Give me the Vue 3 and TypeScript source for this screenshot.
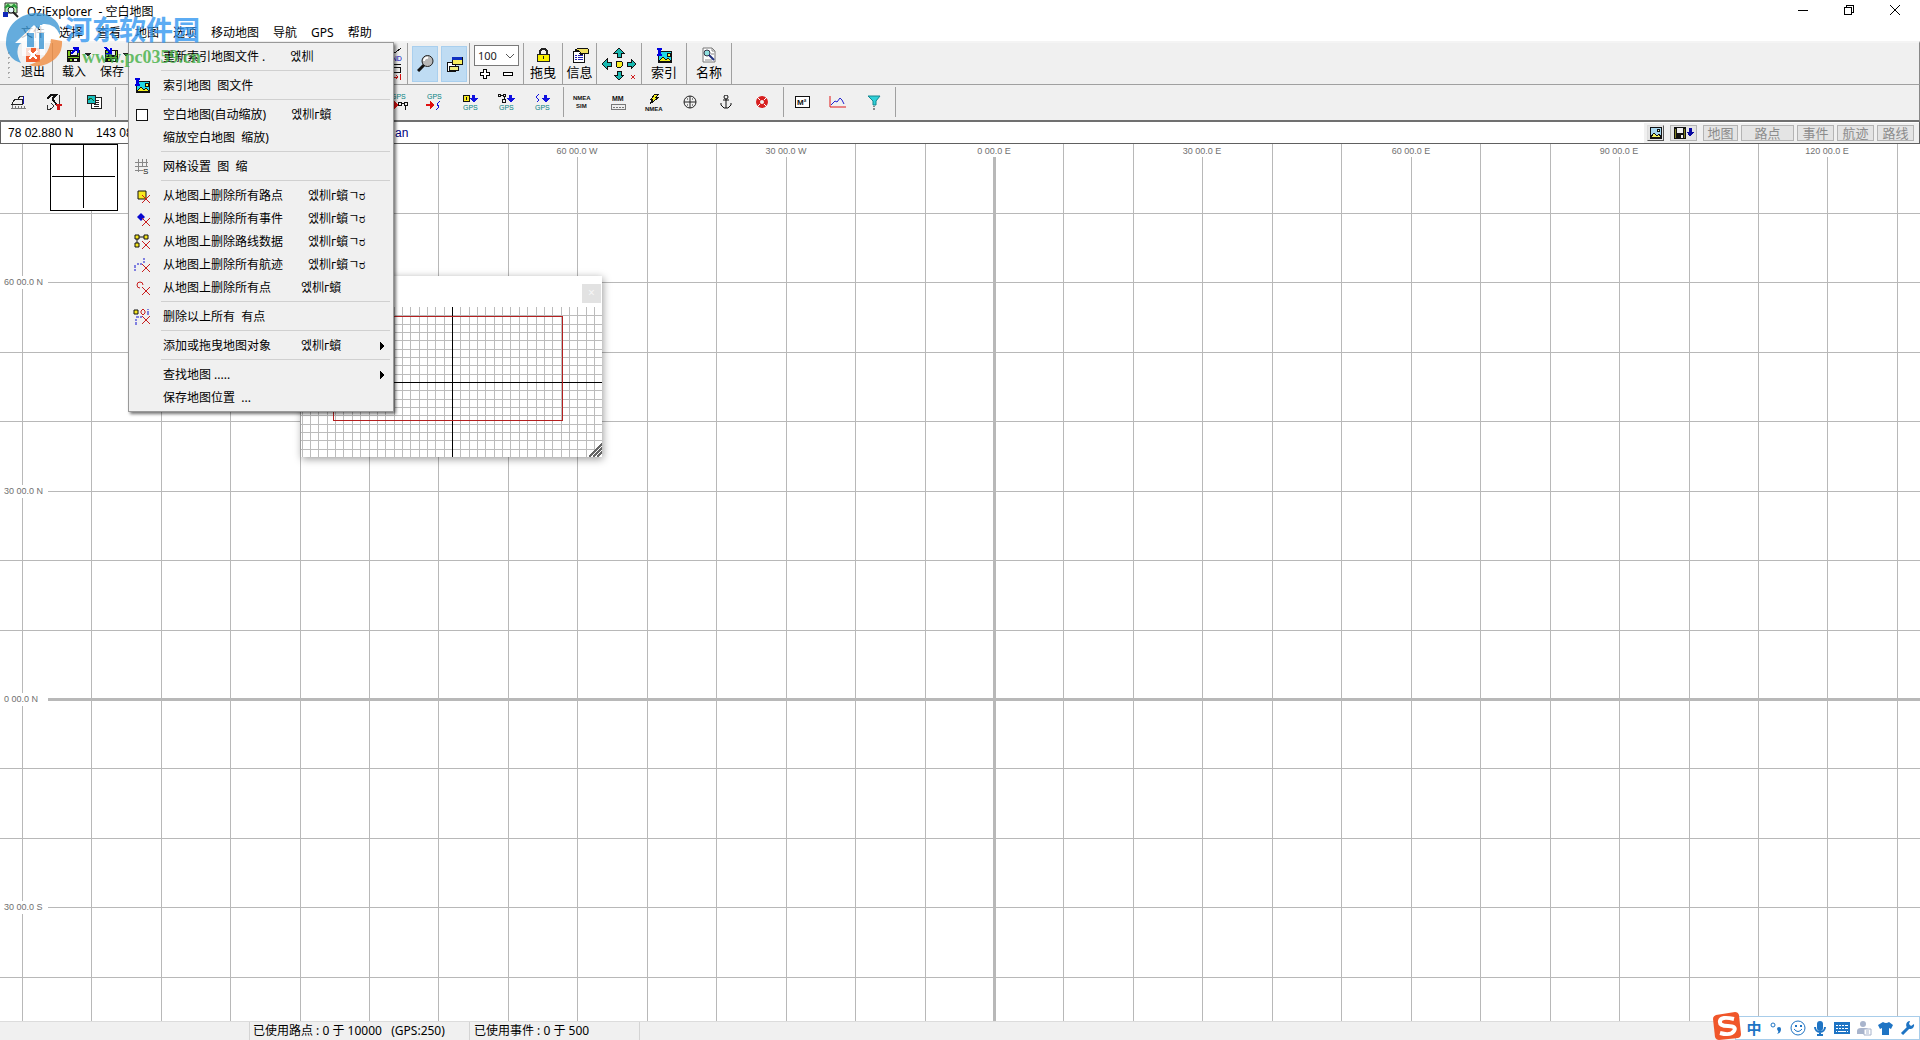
<script setup lang="ts">
import { h, ref } from 'vue'

type Shape = { d?: string; f?: string; s?: string; w?: number; t?: string; x?: number; y?: number; z?: number; b?: boolean }
type Icon = { w: number; h: number; soft?: boolean; shapes: Shape[] }

const GPS_TOP: Shape = { t: 'GPS', x: 3, y: 6, f: '#008080', z: 7 }
const GPS_LOW: Shape = { t: 'GPS', x: 3, y: 17, f: '#008080', z: 7 }
const RED_X: Shape = { d: 'M8 7l8 8M16 7l-8 8', s: '#c81e1e', w: 1 }
const FLOPPY: Shape[] = [
  { d: 'M1 3h13v12h-13z', f: '#111' },
  { d: 'M2 4h2v5h-2zM12 4h1v5h-1zM2 10h11v1h-11zM4 12h2v2h-2z', f: '#7ec820' },
  { d: 'M5 4h6v4h-6z', f: '#efefef' },
  { d: 'M8 12h3v2h-3z', f: '#efefef' },
]

const PICTURE: Shape[] = [
  { d: 'M4 3h10v11h-13v-6', f: '#20d8e8', s: '#111', w: 1 },
  { d: 'M2 13l4-4 3 3 2-2 3 3z', f: '#f0f020', s: '#111', w: 1 },
  { d: 'M10 5h3v3h-3z', f: '#f8f840', s: '#111', w: 1 },
  { d: 'M0 0h5v2h-1v4h1v2h-5v-2h1v-4h-1z', f: '#0000e0' },
]

const icons: Record<string, Icon> = {
  app: { w: 16, h: 16, soft: true, shapes: [
    { d: 'M2 1h12v10h-12z', f: '#b8f0b0', s: '#333', w: 1 },
    { d: 'M2 6l3-3 3 3 3-3 3 3', s: '#2a9a3a', w: 2 },
    { d: 'M5 8a3 3 0 1 0 6 0a3 3 0 1 0-6 0', f: '#e8f8ff', s: '#222', w: 1 },
    { d: 'M10 10l5 5', s: '#222', w: 2 },
    { d: 'M0 10h5v5h-5z', f: '#1028b8' },
  ] },
  exit: { w: 16, h: 16, shapes: [
    { d: 'M1 1h14v14h-14z', f: '#f06030' }, { d: 'M4 4l8 8M12 4l-8 8', s: '#fff', w: 2 },
  ] },
  load: { w: 16, h: 16, shapes: [...FLOPPY, { d: 'M5 7l6-6M7 1h5v5', s: '#0000e0', w: 2 }] },
  save: { w: 16, h: 16, shapes: [...FLOPPY, { d: 'M1 0l6 6M7 1v6h-5', s: '#0000e0', w: 2 }] },
  caret: { w: 8, h: 4, shapes: [{ d: 'M0 0h7l-3 4z', f: '#222' }] },
  track: { w: 16, h: 36, shapes: [
    { d: 'M2 8l4-2h4l5-4', s: '#111', w: 1 },
    { t: 'SND', x: 1, y: 15, f: '#0000c0', z: 7 },
    { d: 'M1 18h14M7 21h7v5h-7zM1 23h6', s: '#111', w: 1 },
    { d: 'M3 31h9M10 29l2 2-2 2M14 28v6', s: '#d01010', w: 1 },
  ] },
  lens: { w: 17, h: 17, soft: true, shapes: [
    { d: 'M7 10l-6 6', s: '#111', w: 3 },
    { d: 'M5 6a5 5 0 1 0 11 0a5 5 0 1 0-11 0', f: '#b8b8b8', s: '#222', w: 1 },
    { d: 'M7 6a3 3 0 0 1 4-3', s: '#fff', w: 2 },
  ] },
  windows: { w: 17, h: 16, shapes: [
    { d: 'M1 6h8v9h-8z', f: '#fff', s: '#111', w: 1 },
    { d: 'M3 10h9v4h-9z', f: '#f0f080', s: '#111', w: 1 },
    { d: 'M6 1h10v7h-10z', f: '#f8f060', s: '#111', w: 1 },
    { d: 'M6 1h10v3h-10z', f: '#1030c0' },
  ] },
  lock: { w: 15, h: 16, shapes: [
    { d: 'M4 8v-4l2-2h3l2 2v4', s: '#222', w: 2 },
    { d: 'M1 7h12v7h-12z', f: '#f8f000', s: '#222', w: 1 },
    { d: 'M7 9h1v3h-1z', f: '#222' },
  ] },
  info: { w: 18, h: 16, shapes: [
    { d: 'M2 4h11v11h-11z', f: '#fff', s: '#111', w: 1 },
    { d: 'M4 8h2M7 8h5M4 10h2M7 10h5M4 12h2M7 12h5', s: '#2020b0', w: 1 },
    { d: 'M4 3l4-2h4l5 1v4h-4l-3 2-2-2h2l-2-2z', f: '#f0e060', s: '#111', w: 1 },
  ] },
  arrows: { w: 36, h: 34, shapes: [
    { d: 'M18 1l5 5h-3v4h-4v-4h-3z M18 33l5-5h-3v-4h-4v4h-3z M1 17l5-5v3h4v4h-4v3z M35 17l-5-5v3h-4v4h4v3z', f: '#18b8b0', s: '#111', w: 1 },
    { d: 'M16 14h4l1 1v4l-1 1h-4l-1-1v-4z', f: '#f8f020', s: '#111', w: 1 },
    { d: 'M30 28l4 4M34 28l-4 4', s: '#d02020', w: 1 },
  ] },
  picture: { w: 15, h: 15, shapes: PICTURE },
  find: { w: 16, h: 16, soft: true, shapes: [
    { d: 'M2 1h9l3 3v11h-12z', f: '#fff', s: '#777', w: 1 },
    { d: 'M11 1v3h3M4 13h7M10 7h3', s: '#888', w: 1 },
    { d: 'M3 6a3 3 0 1 0 6 0a3 3 0 1 0-6 0', f: '#90e0e0', s: '#334', w: 1 },
    { d: 'M8 8l5 5', s: '#203080', w: 2 },
  ] },
  plan: { w: 17, h: 16, shapes: [
    { d: 'M2 10l3-5h7v5zM8 5l2-3h3v8', s: '#222', w: 1 },
    { d: 'M13 2h1v8h-1z', f: '#1010b0' },
    { d: 'M1 14h15M2 11v3M5 12v2M8 12v2M11 12v2M14 12v2', s: '#777', w: 1 },
  ] },
  tools: { w: 17, h: 17, shapes: [
    { d: 'M1 5l4-4h5l-3 3v2l4 5', s: '#111', w: 2 },
    { d: 'M1 11v4l2 1 3-2 2-2-3-3M13 1v10', s: '#333', w: 1 },
    { d: 'M10 10h6v2h-2v4h-3v-4h-1z', f: '#d01818' },
  ] },
  pages: { w: 16, h: 16, shapes: [
    { d: 'M5 3h10v11h-10z', f: '#fff', s: '#222', w: 1 },
    { d: 'M8 6h5M8 8h5M8 10h5M8 12h5', s: '#222', w: 1 },
    { d: 'M1 1h8v8h-8z', f: '#18c0c0', s: '#222', w: 1 },
    { d: 'M2 6l3-2 3 3', s: '#186020', w: 1 },
  ] },
  gpsRoute: { w: 20, h: 18, shapes: [GPS_TOP, { d: 'M1 11h5v-3l5 4-5 4v-3h-5z', f: '#e01010' }, { d: 'M10 9h3v3h-3zM13 10h4M16 9h3v3h-3zM17 12v5', s: '#111', w: 1 }] },
  gpsTrack: { w: 20, h: 18, shapes: [GPS_TOP, { d: 'M2 11h4v-3l5 4-5 4v-3h-4z', f: '#e01010' }, { d: 'M16 8l-3 3 2 3-3 3', s: '#1010e0', w: 1 }] },
  pointGps: { w: 20, h: 18, shapes: [GPS_LOW, { d: 'M3 2h6v6h-6z', f: '#f8e820', s: '#111', w: 1 }, { d: 'M6 4v3', s: '#111', w: 1 }, { d: 'M12 2h3v3h3l-4 4-5-4h3z', f: '#1010e0' }] },
  routeGps: { w: 20, h: 18, shapes: [GPS_LOW, { d: 'M2 1h2v2h-2zM4 2h3M7 1h2v2h-2zM8 3v3M6 6h3v3h-3z', s: '#111', w: 1 }, { d: 'M13 2h3v3h3l-4 4-5-4h3z', f: '#1010e0' }] },
  trackGps: { w: 20, h: 18, shapes: [GPS_LOW, { d: 'M7 1l-3 3 3 3-2 2', s: '#1010e0', w: 1 }, { d: 'M12 2h3v3h3l-4 4-5-4h3z', f: '#1010e0' }] },
  nmeaSim: { w: 20, h: 18, shapes: [{ t: 'NMEA', x: 1, y: 7, f: '#111', z: 6, b: true }, { t: 'SIM', x: 4, y: 15, f: '#111', z: 6, b: true }] },
  mm: { w: 20, h: 18, shapes: [
    { t: 'MM', x: 4, y: 8, f: '#111', z: 7, b: true },
    { d: 'M3 11h14v5h-14z', f: '#eee', s: '#777', w: 1 }, { d: 'M5 14h2M8 14h2M11 14h2M14 14h2', s: '#777', w: 1 },
  ] },
  nmea: { w: 20, h: 18, shapes: [{ d: 'M11 1h4l-3 3h3l-9 7 3-5h-2z', f: '#f8f020', s: '#111', w: 1 }, { t: 'NMEA', x: 1, y: 18, f: '#111', z: 6, b: true }] },
  target: { w: 16, h: 16, soft: true, shapes: [{ d: 'M2 8a6 6 0 1 0 12 0a6 6 0 1 0-12 0M8 2v12M2 8h12', s: '#222', w: 1 }, { d: 'M5 5h1M10 5h1M5 11h1M10 11h1', s: '#222', w: 1 }] },
  anchor: { w: 12, h: 14, soft: true, shapes: [{ d: 'M4 2a2 2 0 1 0 4 0a2 2 0 1 0-4 0M6 4v9M3 5h6M1 8v2l3 3h4l3-3v-2', s: '#111', w: 1 }] },
  buoy: { w: 14, h: 14, soft: true, shapes: [
    { d: 'M3 7a4 4 0 1 0 8 0a4 4 0 1 0-8 0', s: '#d82020', w: 4 },
    { d: 'M2 2l3 3M12 2l-3 3M2 12l3-3M12 12l-3-3', s: '#fff', w: 1 },
  ] },
  area: { w: 16, h: 14, shapes: [{ d: 'M1 1h14v11h-14z', f: '#fff', s: '#111', w: 1 }, { t: 'M²', x: 3, y: 10, f: '#111', z: 8, b: true }] },
  profile: { w: 18, h: 14, soft: true, shapes: [{ d: 'M1 1v11h16', s: '#e01818', w: 1 }, { d: 'M2 10l4-4 2 1 3-4 2 2 2 4', s: '#2020d0', w: 1 }] },
  funnel: { w: 14, h: 16, soft: true, shapes: [{ d: 'M1 2h12l-4 5v4h-3v-4z', f: '#30d0d8', s: '#148890', w: 1 }, { d: 'M7 12v1M7 14v2', s: '#222', w: 1 }] },
  box: { w: 14, h: 14, shapes: [{ d: 'M1 1h11v11h-11z', f: '#fff', s: '#111', w: 1 }] },
  grid: { w: 16, h: 16, shapes: [{ d: 'M4 0v13M8 0v8M12 0v8M1 3h13M1 7h13M1 11h8', s: '#888', w: 1 }, { t: 'S', x: 9, y: 15, f: '#111', z: 8 }] },
  delPoint: { w: 17, h: 16, soft: true, shapes: [{ d: 'M4 3h8v8h-8z', f: '#f8e820', s: '#111', w: 1 }, RED_X] },
  delEvent: { w: 17, h: 16, soft: true, shapes: [{ d: 'M3 6l4-4 4 4-4 4z', f: '#0808d0' }, RED_X] },
  delRoute: { w: 17, h: 16, soft: true, shapes: [{ d: 'M5 3h7M3 5v6', s: '#111', w: 1 }, { d: 'M1 1h4v4h-4zM10 1h4v4h-4zM1 9h4v4h-4z', f: '#f8e820', s: '#111', w: 1 }, RED_X] },
  delTrack: { w: 17, h: 16, soft: true, shapes: [{ d: 'M10 1v2M10 4v2M1 8v3M1 12v2M3 7h2M6 7h2', s: '#1010d0', w: 1 }, RED_X] },
  delDots: { w: 17, h: 16, soft: true, shapes: [{ d: 'M9 5a3 3 0 1 0-3 3', s: '#c81e1e', w: 1 }, RED_X] },
  delAll: { w: 19, h: 18, soft: true, shapes: [{ d: 'M1 2h4v4h-4z', f: '#f8e820', s: '#111', w: 1 }, { d: 'M8 3l2-2 2 2v2l-2 2-2-2z', s: '#c81e1e', w: 1 }, { d: 'M15 1v1M15 3v4M3 9h3M7 9h2M3 11v2M3 14v3', s: '#1010d0', w: 1 }, { d: 'M9 8l8 8M17 8l-8 8', s: '#c81e1e', w: 1 }] },
  more: { w: 5, h: 8, shapes: [{ d: 'M0 0l4 4-4 4z', f: '#000' }] },
  photo: { w: 14, h: 14, shapes: [{ d: 'M1 1h11v11h-11z', f: '#a8d8f0', s: '#111', w: 1 }, { d: 'M2 11l3-4 3 3 2-2 2 3z', f: '#f0f060', s: '#111', w: 1 }, { d: 'M8 3h2v2h-2z', f: '#ffffa0', s: '#111', w: 1 }] },
  disk: { w: 22, h: 14, shapes: [{ d: 'M1 1h12v12h-12z', f: '#111' }, { d: 'M4 2h6v5h-6zM8 9h2v3h-2z', f: '#eee' }, { d: 'M2 3h1v9h-1zM11 3h1v9h-1z', f: '#808020' }, { d: 'M16 2h3v4h2l-4 5-3-5h2z', f: '#0808a0' }] },
  min: { w: 12, h: 12, shapes: [{ d: 'M1 6h10', s: '#000', w: 1 }] },
  restore: { w: 12, h: 12, shapes: [{ d: 'M1 3h7v7h-7zM3 3v-2h7v7h-2', s: '#000', w: 1 }] },
  close: { w: 12, h: 12, soft: true, shapes: [{ d: 'M1 1l10 10M11 1l-10 10', s: '#000', w: 1 }] },
  plus: { w: 12, h: 12, shapes: [{ d: 'M4 1h3v3h3v3h-3v3h-3v-3h-3v-3h3z', f: '#fff', s: '#000', w: 1 }] },
  minus: { w: 12, h: 12, shapes: [{ d: 'M1 4h9v3h-9z', f: '#fff', s: '#000', w: 1 }] },
  smile: { w: 16, h: 16, soft: true, shapes: [{ d: 'M1 8a7 7 0 1 0 14 0a7 7 0 1 0-14 0M4 9q4 5 8 0', s: '#1e74c4', w: 1 }, { d: 'M5 5h2v2h-2zM10 5h2v2h-2z', f: '#1e74c4' }] },
  comma: { w: 14, h: 14, soft: true, shapes: [{ d: 'M2 4a2 2 0 1 0 4 0a2 2 0 1 0-4 0', s: '#1e74c4', w: 1 }, { d: 'M8 8a2 2 0 0 1 4 0q0 4-4 5q2-2 1-3z', f: '#1e74c4' }] },
  mic: { w: 14, h: 16, soft: true, shapes: [{ d: 'M4 4a3 3 0 0 1 6 0v4a3 3 0 0 1-6 0z', f: '#1e74c4' }, { d: 'M2 7a5 5 0 0 0 10 0M7 12v3M4 15h6', s: '#1e74c4', w: 2 }] },
  keyboard: { w: 16, h: 12, shapes: [{ d: 'M0 0h16v12h-16z', f: '#1e74c4' }, { d: 'M2 3h2M5 3h2M8 3h2M11 3h3M2 6h2M5 6h2M8 6h2M11 6h3M2 9h1M4 9h8M13 9h1', s: '#fff', w: 1 }] },
  person: { w: 16, h: 16, soft: true, shapes: [{ d: 'M4 4a3 3 0 1 0 6 0a3 3 0 1 0-6 0M1 14v-3q0-3 4-3h4q4 0 4 3v3z', f: '#a8b4cc' }, { d: 'M8 9h7v6h-7z', f: '#fff', s: '#a8b4cc', w: 1 }, { d: 'M10 11h3M10 13h3', s: '#a8b4cc', w: 1 }] },
  shirt: { w: 16, h: 14, soft: true, shapes: [{ d: 'M5 1q3 2 6 0l4 3-2 4-2-1v7h-7v-7l-2 1-2-4z', f: '#1e74c4' }] },
  wrench: { w: 16, h: 16, soft: true, shapes: [{ d: 'M2 14l7-7', s: '#1e74c4', w: 3 }, { d: 'M14 4a4 4 0 1 1-4-3l-1 3 2 2z', f: '#1e74c4' }] },
}

const Glyph = (props: { name: string }) => {
  const icon = icons[props.name]
  return h('svg', { width: icon.w, height: icon.h, viewBox: `0 0 ${icon.w} ${icon.h}`, class: 'glyph', 'aria-hidden': 'true', 'shape-rendering': icon.soft ? 'auto' : 'crispEdges' },
    icon.shapes.map((p) => p.t
      ? h('text', { x: p.x, y: p.y, fill: p.f, 'font-size': p.z, 'font-weight': p.b ? 700 : 400, 'font-family': '"Liberation Sans", sans-serif' }, p.t)
      : h('path', { d: p.d, fill: p.f ?? 'none', stroke: p.s ?? 'none', 'stroke-width': p.w ?? 0 })))
}
Glyph.props = ['name']

const menus = ['文件', '选择', '查看', '地图', '选项', '移动地图', '导航', 'GPS', '帮助']
const controls = [
  { icon: 'min', label: '最小化' }, { icon: 'restore', label: '还原' }, { icon: 'close', label: '关闭' },
]

type Entry = { text?: string; icon?: string; keys?: string; wide?: boolean; sub?: boolean }
const SHORT = '엤杊ᴦ蠀'
const LONG = '엤杊ᴦ蠀ㄱರ'
const entries: Entry[] = [
  { text: '重新索引地图文件 .', keys: '엤杊' }, {},
  { text: '索引地图 \u00a0图文件', icon: 'picture' }, {},
  { text: '空白地图(自动缩放)', icon: 'box', keys: SHORT },
  { text: '缩放空白地图 \u00a0缩放)' }, {},
  { text: '网格设置 \u00a0图 \u00a0缩', icon: 'grid' }, {},
  { text: '从地图上删除所有路点', icon: 'delPoint', keys: LONG },
  { text: '从地图上删除所有事件', icon: 'delEvent', keys: LONG },
  { text: '从地图上删除路线数据', icon: 'delRoute', keys: LONG },
  { text: '从地图上删除所有航迹', icon: 'delTrack', keys: LONG },
  { text: '从地图上删除所有点', icon: 'delDots', keys: SHORT, wide: true }, {},
  { text: '删除以上所有 \u00a0有点', icon: 'delAll' }, {},
  { text: '添加或拖曳地图对象', keys: SHORT, wide: true, sub: true }, {},
  { text: '查找地图 .....', sub: true },
  { text: '保存地图位置 \u00a0...' },
]

const tools = [
  { kind: 'start', items: ['plan', 'tools'] },
  { kind: 'start', items: ['pages'] },
  { kind: 'gps', items: ['gpsRoute', 'gpsTrack', 'pointGps', 'routeGps', 'trackGps'] },
  { kind: 'start', items: ['nmeaSim', 'mm', 'nmea', 'target', 'anchor', 'buoy'] },
  { kind: 'start', items: ['area', 'profile', 'funnel'] },
]
const layers = ['地图', '路点', '事件', '航迹', '路线']
const ime = ['comma', 'smile', 'mic', 'keyboard', 'person', 'shirt', 'wrench']

/* Five-step graticule, centred on 0°E 0°N; every third line is labelled */
const CX = 994
const CY = 555
const STEP = 69.45
const meridians = Array.from({ length: 40 }, (_, i) => i - 14).map((n) => ({ n, x: Math.round(CX + n * STEP) }))
const parallels = Array.from({ length: 26 }, (_, i) => i - 7).map((n) => ({ n, y: Math.round(CY + n * STEP) }))
const lonLabels = meridians.filter((m) => m.n % 3 === 0 && m.n >= -6 && m.n <= 12).map((m) => ({ x: m.x, text: `${Math.abs(m.n * 10)} 00.0 ${m.n < 0 ? 'W' : 'E'}` }))
const latLabels = parallels.filter((p) => p.n % 3 === 0 && p.n >= -6 && p.n <= 3).map((p) => ({ y: p.y, text: `${Math.abs(p.n * 10)} 00.0 ${p.n > 0 ? 'S' : 'N'}` }))

const miniX = Array.from({ length: 37 }, (_, i) => Math.round(151 + (i - 18) * 8.35))
const miniY = Array.from({ length: 18 }, (_, i) => Math.round(75 + (i - 8) * 8.35))

const zoom = ref('100')
</script>

<template>
  <div class="app">
    <header class="titlebar">
      <Glyph name="app" />
      <h1>OziExplorer &nbsp;- 空白地图</h1>
      <div class="controls">
        <button v-for="c in controls" :key="c.icon" type="button" :aria-label="c.label"><Glyph :name="c.icon" /></button>
      </div>
    </header>

    <nav class="menubar">
      <button v-for="m in menus" :key="m" type="button">{{ m }}</button>
    </nav>

    <div class="toolbar main-tools">
      <div class="group g-exit">
        <span class="grip"></span>
        <button type="button" class="tool"><Glyph name="exit" /><span>退出</span></button>
      </div>
      <div class="group g-file">
        <button type="button" class="tool"><span class="with-caret"><Glyph name="load" /><Glyph name="caret" /></span><span>载入</span></button>
        <button type="button" class="tool"><span class="with-caret"><Glyph name="save" /><Glyph name="caret" /></span><span>保存</span></button>
        <button type="button" class="tool push" aria-label="航迹"><Glyph name="track" /></button>
      </div>
      <div class="group g-view">
        <button type="button" class="toggle" aria-label="放大镜"><Glyph name="lens" /></button>
        <button type="button" class="toggle" aria-label="窗口"><Glyph name="windows" /></button>
      </div>
      <div class="group g-zoom">
        <span class="combo">
          <select v-model="zoom" aria-label="缩放"><option>100</option><option>200</option></select>
          <svg class="chev" width="10" height="6" viewBox="0 0 10 6" aria-hidden="true"><path d="M1 1l4 4 4-4" fill="none" stroke="#555" /></svg>
        </span>
        <span class="steps">
          <button type="button" aria-label="放大"><Glyph name="plus" /></button>
          <button type="button" aria-label="缩小"><Glyph name="minus" /></button>
        </span>
      </div>
      <div class="group g-drag"><button type="button" class="tool big"><Glyph name="lock" /><span>拖曳</span></button></div>
      <div class="group g-info"><button type="button" class="tool big"><Glyph name="info" /><span>信息</span></button></div>
      <div class="group g-name"><button type="button" class="tool" aria-label="移动地图"><Glyph name="arrows" /></button></div>
      <div class="group g-name"><button type="button" class="tool big"><Glyph name="picture" /><span>索引</span></button></div>
      <div class="group g-name"><button type="button" class="tool big"><Glyph name="find" /><span>名称</span></button></div>
    </div>

    <div class="toolbar sub-tools">
      <div v-for="(g, i) in tools" :key="i" class="set" :class="g.kind">
        <button v-for="t in g.items" :key="t" type="button" :aria-label="t"><Glyph :name="t" /></button>
      </div>
    </div>

    <div class="coords">
      <span class="lat">78 02.880 N</span>
      <span class="lon">143 08.640 W</span>
      <span class="datum">an</span>
      <div class="layers">
        <button type="button" class="raised" aria-label="图片"><Glyph name="photo" /></button>
        <button type="button" class="flat" aria-label="保存"><Glyph name="disk" /></button>
        <button v-for="(l, i) in layers" :key="l" type="button" class="layer" :class="{ wide: i === 1 }" disabled>{{ l }}</button>
      </div>
    </div>

    <main class="map">
      <svg class="chart" shape-rendering="crispEdges" font-family="'Liberation Sans', sans-serif" font-size="9">
        <rect v-for="m in meridians" :key="'m' + m.n" :x="m.n ? m.x : m.x - 1" y="0" :width="m.n ? 1 : 3" height="100%" fill="#b8b8b8" />
        <rect v-for="p in parallels" :key="'p' + p.n" x="0" :y="p.n ? p.y : p.y - 1" width="100%" :height="p.n ? 1 : 3" fill="#b8b8b8" />
        <g v-for="l in lonLabels" :key="'x' + l.x">
          <rect :x="l.x - 24" y="0" width="48" height="13" fill="#fff" />
          <text :x="l.x" y="10" text-anchor="middle" fill="#707070">{{ l.text }}</text>
        </g>
        <g v-for="l in latLabels" :key="'y' + l.y">
          <rect x="0" :y="l.y - 6" width="48" height="13" fill="#fff" />
          <text x="4" :y="l.y + 3" fill="#707070">{{ l.text }}</text>
        </g>
        <g fill="none" stroke="#000">
          <rect x="50" y="0" width="67" height="66" fill="#fff" />
          <path d="M52 32h63M83 1v63" />
        </g>
      </svg>

      <section class="overview" aria-label="地图概览">
        <div class="overview-bar"><button type="button" aria-label="关闭概览">×</button></div>
        <svg width="301" height="150" viewBox="0 0 301 150" shape-rendering="crispEdges" aria-hidden="true">
          <rect v-for="x in miniX" :key="'v' + x" :x="x" y="0" width="1" height="150" fill="#bcbcbc" />
          <rect v-for="y in miniY" :key="'h' + y" x="0" :y="y" width="301" height="1" fill="#bcbcbc" />
          <rect x="151" y="0" width="1" height="150" fill="#000" />
          <rect x="0" y="75" width="301" height="1" fill="#000" />
          <path d="M32 9h229v104h-229z" fill="none" stroke="#b42020" />
          <path d="M287 150l14-14v14z" fill="#fff" />
          <path d="M288 150l13-13M292 150l9-9M296 150l5-5" stroke="#666" stroke-width="2" />
        </svg>
      </section>
    </main>

    <footer class="status">
      <span class="cell blank"></span>
      <span class="cell waypoints">已使用路点 : 0 于 10000 &nbsp;&nbsp;(GPS:250)</span>
      <span class="cell events">已使用事件 : 0 于 500</span>
    </footer>

    <div class="popup" role="menu">
      <template v-for="(e, i) in entries" :key="i">
        <button v-if="e.text" type="button" role="menuitem" class="entry">
          <span class="entry-icon"><Glyph v-if="e.icon" :name="e.icon" /></span>
          <span>{{ e.text }}</span>
          <span v-if="e.keys" class="keys" :class="{ wide: e.wide }">{{ e.keys }}</span>
          <Glyph v-if="e.sub" name="more" class="more" />
        </button>
        <hr v-else />
      </template>
    </div>

    <div class="ime">
      <svg class="sogou" width="28" height="28" viewBox="0 0 28 28" aria-hidden="true">
        <path d="M3 3l19-3q3 0 4 3l2 19q0 3-3 4l-19 2q-3 0-4-3l-2-18q0-3 3-4z" fill="#f0562a" />
        <path d="M21 7q-13-3-14 2t8 5t6 5t-14 2" fill="none" stroke="#fff" stroke-width="4" />
      </svg>
      <button type="button" class="zh">中</button>
      <button v-for="n in ime" :key="n" type="button" :aria-label="n"><Glyph :name="n" /></button>
    </div>

    <div class="stamp">
      <svg width="60" height="58" viewBox="0 0 60 58" aria-hidden="true">
        <path d="M1 34Q0 14 18 5Q36-3 50 9Q56 15 55 24Q50 12 38 13L14 34Q10 42 16 52Q3 48 1 34z" fill="#3a96d4" />
        <path d="M57 30Q58 46 42 53Q32 57 24 54Q44 48 46 28z" fill="#f08a3c" />
        <path d="M10 32L29 14l6 6v-6h6v13l5 5h-6v12h-9v-14h-5v15h-9v-13z" fill="#fff" />
        <path d="M22 22h7v14h-7zM34 22h5v16h-5z" fill="#3a96d4" />
      </svg>
      <div class="stamp-text">
        <strong>河东软件园</strong>
        <span>www.pc0359.cn</span>
      </div>
    </div>
  </div>
</template>

<style>
body { background: #fff; }
</style>

<style scoped>
.app {
  position: relative;
  display: flex;
  flex-direction: column;
  height: 100vh;
  overflow: hidden;
  background: #fff;
  color: #000;
  font: 12px/16px "Noto Sans", "Noto Sans CJK SC", sans-serif;
}
button {
  margin: 0;
  padding: 0;
  border: 0;
  background: none;
  color: inherit;
  font: inherit;
  white-space: nowrap;
}
.glyph { display: block; flex: none; }

.titlebar { display: flex; align-items: flex-start; height: 24px; padding: 2px 2px 0 3px; box-sizing: border-box; }
.titlebar h1 { margin: 2px 0 0 8px; font-size: 12px; font-weight: 400; line-height: 16px; }
.controls { display: flex; margin-left: auto; }
.controls button { display: flex; justify-content: center; align-items: center; width: 46px; height: 16px; }

.menubar { display: flex; gap: 14px; height: 17px; padding-left: 21px; }
.menubar button { line-height: 18px; }

.toolbar { display: flex; background: #f0f0f0; box-sizing: border-box; border-right: 1px solid #888; }
.main-tools { height: 44px; border-top: 2px solid #f4f4f4; border-bottom: 1px solid #a0a0a0; }
.group { display: flex; align-items: center; box-sizing: border-box; border-right: 1px solid #a0a0a0; }
.g-exit { width: 53px; padding-left: 6px; gap: 8px; }
.grip { width: 5px; height: 28px; background: radial-gradient(circle, #aaa 1px, transparent 1px) 0 0 / 5px 5px; }
.g-file { width: 355px; padding-left: 3px; gap: 2px; }
.g-view { width: 62px; padding-left: 2px; justify-content: center; gap: 3px; }
.g-zoom { width: 54px; flex-direction: column; gap: 2px; }
.g-drag { width: 39px; justify-content: center; }
.g-info { width: 34px; justify-content: center; }
.g-name { width: 45px; justify-content: center; }
.tool { display: flex; flex-direction: column; align-items: center; gap: 1px; min-width: 28px; line-height: 16px; }
.tool.big { font-size: 13px; }
.with-caret { display: flex; align-items: center; gap: 2px; padding-left: 10px; }
.push { margin-left: auto; margin-right: 5px; min-width: 16px; }
.toggle { display: flex; align-items: center; justify-content: center; width: 26px; height: 36px; background: #bfdcf3; border: 1px solid #a9cfee; }
.combo { position: relative; display: flex; margin-top: 2px; }
.combo select { appearance: none; width: 45px; height: 21px; padding: 0 0 0 3px; border: 1px solid #7a7a7a; border-radius: 0; background: #fff; color: #222; font: 11px/16px "Noto Sans", sans-serif; }
.chev { position: absolute; right: 4px; top: 8px; }
.steps { display: flex; gap: 11px; }

.sub-tools { height: 37px; padding: 2px 0 3px; border-bottom: 2px solid #707070; }
.set { display: flex; align-items: center; padding: 0 3px 0 0; border-right: 1px solid #a0a0a0; }
.set button { display: flex; align-items: center; justify-content: center; width: 36px; height: 32px; }
.set.gps { width: 444px; justify-content: flex-end; }

.coords { display: flex; align-items: center; height: 22px; box-sizing: border-box; border: 1px solid #606060; border-top: 0; padding-left: 7px; font: 12px/16px "Liberation Sans", sans-serif; }
.lat { width: 88px; }
.lon { width: 299px; }
.datum { color: #000080; }
.layers { display: flex; align-items: center; gap: 3px; height: 20px; margin-left: auto; padding: 0 5px 0 3px; background: #f0f0f0; font: 13px/14px "Noto Sans CJK SC", sans-serif; }
.layers button { display: flex; align-items: center; justify-content: center; box-sizing: border-box; height: 16px; width: 37px; border: 1px solid #b4b4b4; color: #8c8c8c; background: #e4e4e4; }
.layers .raised { width: 17px; margin-right: 3px; border-color: #ddd #555 #555 #ddd; }
.layers .flat { width: 27px; margin-right: 3px; }
.layers .layer:nth-child(3) { width: 35px; }
.layers .wide { width: 53px; }

.map { position: relative; display: flex; flex: 1; min-height: 0; }
.chart { display: block; flex: 1; min-width: 0; height: 100%; }
.overview { position: absolute; left: 301px; top: 132px; width: 301px; background: #fff; box-shadow: 1px 2px 8px rgba(0, 0, 0, 0.4); }
.overview-bar { display: flex; justify-content: flex-end; align-items: center; height: 31px; padding-right: 1px; }
.overview-bar button { width: 19px; height: 19px; margin-top: 3px; background: #e2e2e2; color: #f6f6f6; }
.overview svg { display: block; }

.status { display: flex; height: 19px; box-sizing: border-box; border-top: 1px solid #dcdcdc; background: #f0f0f0; }
.cell { box-sizing: border-box; border-right: 1px solid #d4d4d4; padding-left: 3px; line-height: 18px; white-space: nowrap; overflow: hidden; }
.blank { width: 250px; }
.waypoints { width: 220px; }
.events { width: 170px; padding-left: 4px; }

.popup { position: absolute; left: 128px; top: 42px; width: 266px; box-sizing: border-box; padding: 2px; border: 1px solid #999; background: #f0f0f0; box-shadow: 2px 2px 3px rgba(0, 0, 0, 0.55); }
.entry { display: flex; align-items: center; width: 100%; height: 23px; text-align: left; }
.entry-icon { display: flex; justify-content: center; width: 22px; margin-right: 10px; }
.keys { margin-left: 25px; }
.keys.wide { margin-left: 30px; }
.more { margin: 0 6px 0 auto; }
.popup hr { height: 1px; margin: 2px 1px 3px 30px; border: 0; background: #d0d0d0; }

.ime { position: absolute; right: 0; bottom: 0; display: flex; align-items: center; height: 24px; box-sizing: border-box; padding-left: 7px; border: 1px solid #a8cdea; background: #fff; }
.ime button { display: flex; align-items: center; justify-content: center; width: 22px; height: 22px; }
.ime .zh { color: #1e74c4; font-size: 15px; font-weight: 700; }
.sogou { position: absolute; left: -23px; bottom: -1px; }

.stamp { position: absolute; left: 5px; top: 11px; display: flex; opacity: 0.78; pointer-events: none; }
.stamp-text { display: flex; flex-direction: column; }
.stamp strong { color: #2f96f0; font: 700 27px/36px "Noto Sans CJK SC", sans-serif; }
.stamp-text span { margin-left: 17px; color: #3fae3f; font: 700 18px/20px "Liberation Serif", serif; }
</style>
